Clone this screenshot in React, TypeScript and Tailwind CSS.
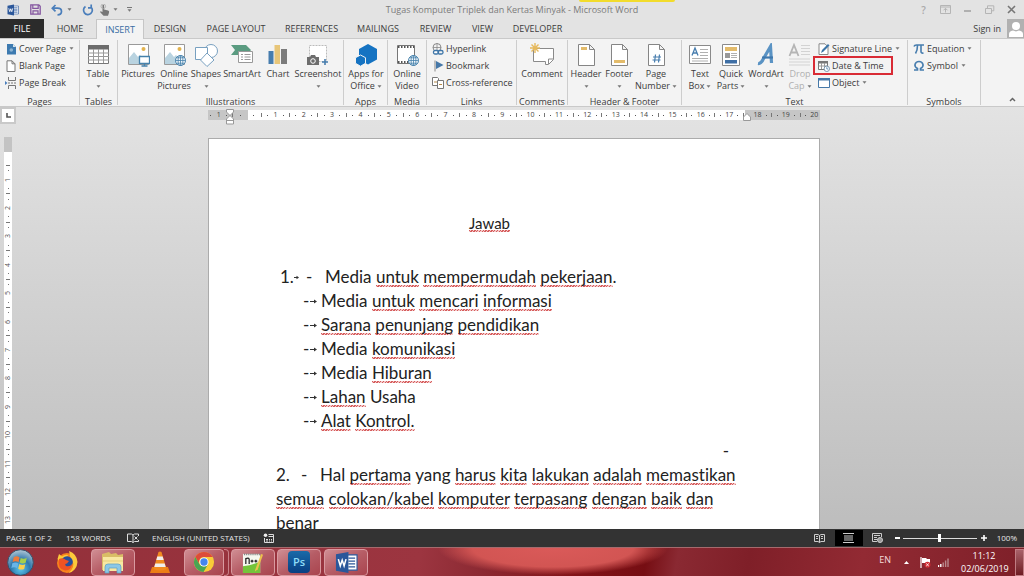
import { Fragment, useState } from "react";
import type { ReactNode } from "react";

const tabs = [
  { label: "HOME", width: "w-[52px]" },
  { label: "INSERT", width: "w-12" },
  { label: "DESIGN", width: "w-[52px]" },
  { label: "PAGE LAYOUT", width: "w-20" },
  { label: "REFERENCES", width: "w-[71px]" },
  { label: "MAILINGS", width: "w-[62px]" },
  { label: "REVIEW", width: "w-[53px]" },
  { label: "VIEW", width: "w-[41px]" },
  { label: "DEVELOPER", width: "w-[69px]" },
];

const answers = [
  "Media _untuk_ _mencari_ _informasi_",
  "_Sarana_ _penunjang_ _pendidikan_",
  "Media _komunikasi_",
  "Media _Hiburan_",
  "_Lahan_ Usaha",
  "_Alat_ _Kontrol._",
];

export default function App() {
  const [active, setActive] = useState("INSERT");

  return (
    <div className="flex h-screen flex-col overflow-hidden bg-[#e3e3e3] font-['Open_Sans','Noto_Sans',sans-serif] text-[9px] leading-3 text-[#3c3c3c]">
      <TitleBar />
      <nav className="flex h-[19px] shrink-0 items-stretch">
        <button className="w-11 bg-[#2b2b2b] text-white">FILE</button>
        {tabs.map((tab) => (
          <button
            key={tab.label}
            onClick={() => setActive(tab.label)}
            className={`${tab.width} whitespace-nowrap ${
              active === tab.label
                ? "relative z-10 -mb-px border border-b-0 border-[#c6c6c6] bg-[#f3f3f3] text-[#3b6da3]"
                : ""
            }`}
          >
            {tab.label}
          </button>
        ))}
        <a href="#signin" className="ml-auto flex items-center pr-[6px]">
          Sign in
        </a>
        <svg className="h-[19px] w-[17px]" viewBox="0 0 17 19">
          <rect width="17" height="19" fill="#b1b1b1" />
          <circle cx="9" cy="7" r="4" fill="#fff" />
          <path d="M2 18v-3q0-3 4-3.500l3 1 3-1q4 .5 4 3.500v3z" fill="#fff" />
        </svg>
      </nav>
      <Ribbon />
      <Workspace />
      <StatusBar />
      <Taskbar />
    </div>
  );
}

function TitleBar() {
  return (
    <header className="relative flex h-[19px] shrink-0 items-center">
      <div className="absolute top-0 left-[579px] h-[2px] w-24 rounded-b bg-[#f2dc2c]" />
      <div className="flex flex-1 items-center pl-[7px] text-[#555]">
        <WordLogo className="h-3 w-3" />
        <button aria-label="Save" className="ml-[11px]">
          <svg className="h-[11px] w-[11px]" viewBox="0 0 11 11" fill="none" stroke="#8455a0">
            <path d="M.8.800h8l1.400 1.400v8H.8z" strokeWidth="1.300" />
            <path d="M2.800 1v3.300h5.400V1M3 10V6.800h5V10" strokeWidth="1.200" />
          </svg>
        </button>
        <button aria-label="Undo" className="ml-[10px]">
          <svg className="h-3 w-3" viewBox="0 0 12 12" fill="none" stroke="#4a7ebb" strokeWidth="1.700">
            <path d="M4.500 1L1.300 4.200l3.200 3.200M1.500 4.200h5q4 0 4 3.300t-4 3.300" />
          </svg>
        </button>
        <Caret className="ml-1" />
        <button aria-label="Repeat" className="ml-[10px]">
          <svg className="h-3 w-3" viewBox="0 0 12 12" fill="none" stroke="#4a7ebb" strokeWidth="1.700">
            <path d="M3.500 2.500A4.400 4.400 0 1 0 9 3M6 3.800h3.200V.6" />
          </svg>
        </button>
        <button aria-label="Touch mode" className="ml-[5px]">
          <svg className="h-3 w-3" viewBox="0 0 12 12">
            <path d="M3.500 1q1.500-.8 1.600.6v4l4 .9q1.500.6.9 2.200L9 11.800H4.500L1 8l.6-.8L3.500 8z" fill="#777" />
            <circle cx="4.300" cy="2.300" r="2.300" fill="none" stroke="#aaa" strokeWidth=".8" />
          </svg>
        </button>
        <Caret className="ml-[2px]" />
        <button aria-label="Customize toolbar" className="ml-[9px] flex flex-col items-center gap-px">
          <span className="h-px w-[5px] bg-[#777]" />
          <Caret />
        </button>
      </div>
      <h1 className="whitespace-nowrap text-[#7b7b7b]">
        Tugas Komputer Triplek dan Kertas Minyak - Microsoft Word
      </h1>
      <div className="flex flex-1 items-center justify-end gap-[11px] pr-[7px] text-[#aaa]">
        <button aria-label="Help" className="w-[11px] text-[10px] font-semibold">?</button>
        <button aria-label="Ribbon display options">
          <svg className="h-[9px] w-[11px]" viewBox="0 0 11 9" fill="none" stroke="#b5b5b5">
            <path d="M.5.500h10v8H.5zM.5 2h10M5.500 7.500v-4M3.500 5.300l2-2 2 2" />
          </svg>
        </button>
        <button aria-label="Minimize">
          <svg className="h-[9px] w-[11px]" viewBox="0 0 11 9">
            <path d="M2 5h7v2H2z" fill="#b0b0b0" />
          </svg>
        </button>
        <button aria-label="Restore">
          <svg className="h-[9px] w-[11px]" viewBox="0 0 11 9" fill="none" stroke="#b5b5b5">
            <path d="M1.500 3.500h6v5h-6zM3.500 3V.8h6.300v5H8" />
          </svg>
        </button>
        <button aria-label="Close">
          <svg className="h-[9px] w-[11px]" viewBox="0 0 11 9" stroke="#777" strokeWidth="1.600">
            <path d="M2 1l7 7M9 1L2 8" />
          </svg>
        </button>
      </div>
    </header>
  );
}

function Caret({ className = "" }: { className?: string }) {
  return (
    <svg className={`inline-block h-[3px] w-[5px] ${className}`} viewBox="0 0 5 3">
      <path d="M.5.300h4L2.500 2.700z" fill="#777" />
    </svg>
  );
}

function Group({ label, width, children }: { label: string; width: string; children: ReactNode }) {
  return (
    <section className={`mt-px flex h-[65px] shrink-0 flex-col border-r border-[#cdcdcd] ${width}`}>
      <div className="flex h-14 shrink-0">{children}</div>
      <h2 className="text-center whitespace-nowrap">{label}</h2>
    </section>
  );
}

type BigProps = {
  icon: ReactNode;
  lines: string[];
  width: string;
  caret?: boolean;
  disabled?: boolean;
};

function Big({ icon, lines, width, caret, disabled }: BigProps) {
  return (
    <button
      disabled={disabled}
      className={`flex shrink-0 flex-col items-center pt-[3px] whitespace-nowrap ${width} ${disabled ? "text-[#b0b0b0]" : ""}`}
    >
      <svg className="mb-px h-6 w-6 shrink-0" viewBox="0 0 24 24" fill="none">
        {icon}
      </svg>
      <span>{lines[0]}</span>
      <span className="flex h-3 items-center gap-[2px]">
        {lines[1]}
        {caret && <Caret />}
      </span>
    </button>
  );
}

function Small({ icon, label, caret, className = "" }: { icon: ReactNode; label: string; caret?: boolean; className?: string }) {
  return (
    <button className={`flex h-[17px] items-center gap-[2px] whitespace-nowrap ${className}`}>
      <svg className="h-3 w-3 shrink-0" viewBox="0 0 12 12" fill="none">
        {icon}
      </svg>
      {label}
      {caret && <Caret className="ml-px" />}
    </button>
  );
}

const picture = (
  <>
    <path d="M2.500 1.500h20v20h-20z" fill="#fff" stroke="#9a9a9a" />
    <circle cx="17.500" cy="6" r="2" fill="#e3b34e" />
    <path d="M3 21V15l5-6 4 5 2-2 4 5v4z" fill="#b9d3e0" />
  </>
);

const globe = (
  <g stroke="#4682ac">
    <circle cx="18.500" cy="17.500" r="5" fill="#f4f8fb" />
    <path d="M13.500 17.500h10M18.500 12.500v10M14.500 14.800h8M14.500 20.200h8" strokeWidth=".8" />
    <ellipse cx="18.500" cy="17.500" rx="2.400" ry="5" strokeWidth=".8" />
  </g>
);

const sheet = <path d="M4.500 1.500h11l5 5v16h-16zM15.500 1.500v5h5" fill="#fff" stroke="#858585" />;

function Ribbon() {
  return (
    <div className="flex h-[69px] shrink-0 border-y border-[#c9c9c9] bg-[#f3f3f3]">
      <Group label="Pages" width="w-20">
        <div className="flex flex-col pl-[5px]">
          <Small
            label="Cover Page"
            caret
            icon={
              <>
                <path d="M2 1h6l3 3v7.500H2z" fill="#3d7ab0" />
                <path d="M8 1v3h3z" fill="#d5e3ee" />
                <circle cx="6.300" cy="7" r="1.800" fill="#8ab2d2" />
              </>
            }
          />
          <Small label="Blank Page" icon={<path d="M2 .8h5l3 3v7.700H2zM7 .8v3h3" fill="#fff" stroke="#777" />} />
          <Small
            label="Page Break"
            icon={
              <>
                <path d="M3.500 0v3.500h7V0M3.500 12V8.500h7V12" stroke="#777" />
                <path d="M3 6h9" stroke="#777" strokeDasharray="2 1" />
                <path d="M0 4l2.500 2L0 8z" fill="#4a7ebb" />
              </>
            }
          />
        </div>
      </Group>
      <Group label="Tables" width="w-[38px]">
        <Big
          width="w-9"
          lines={["Table"]}
          caret
          icon={
            <>
              <path d="M2.500 2.500h20v18h-20z" fill="#fff" stroke="#777" />
              <path d="M2 2h21v4.500H2z" fill="#6b6b6b" />
              <path d="M2 10h21M2 13.500h21M2 17h21M7.500 6v14M12.500 6v14M17.500 6v14" stroke="#999" />
            </>
          }
        />
      </Group>
      <Group label="Illustrations" width="w-[226px]">
        <Big
          width="w-10"
          lines={["Pictures"]}
          icon={
            <>
              {picture}
              <path d="M13.500 13.500h10v7h-10zM18.500 21v2M15.500 23h6" fill="#fff" stroke="#4682ac" strokeWidth="1.300" />
            </>
          }
        />
        <Big width="w-8" lines={["Online", "Pictures"]} icon={<>{picture}{globe}</>} />
        <Big
          width="w-8"
          lines={["Shapes"]}
          caret
          icon={
            <g fill="#fff" stroke="#78a0c0">
              <circle cx="17" cy="8" r="6.500" />
              <path d="M1.500 4.500h12v12h-12z" />
              <path d="M13 10l7 7-7 6.500-6.500-6.500z" />
            </g>
          }
        />
        <Big
          width="w-10"
          lines={["SmartArt"]}
          icon={
            <>
              <path d="M1 2h15l5 5-4 5H1l4-5z" fill="#5a9b80" />
              <path d="M8.500 8.500h14v11h-14z" fill="#fff" stroke="#999" />
              <path d="M11 11.500h2M14.500 11.500h6M11 14h2M14.500 14h6M11 16.500h2M14.500 16.500h6" stroke="#999" />
            </>
          }
        />
        <Big
          width="w-8"
          lines={["Chart"]}
          icon={
            <>
              <path d="M2.500 8h5v13h-5z" fill="#477dae" />
              <path d="M8.500 2H14v19H8.500z" fill="#e8c679" />
              <path d="M15 6h6v15h-6z" fill="#7b7b7b" />
            </>
          }
        />
        <Big
          width="w-12"
          lines={["Screenshot"]}
          caret
          icon={
            <>
              <path d="M3.500 2.500h17v16h-17z" fill="#fff" stroke="#bbb" strokeDasharray="2 1" />
              <path d="M1 14h3l1-2h4l1 2h3v8H1z" fill="#6d6d6d" />
              <circle cx="7" cy="18" r="2.300" stroke="#fff" />
              <path d="M19 16v6M16 19h6" stroke="#477dae" strokeWidth="1.600" />
            </>
          }
        />
      </Group>
      <Group label="Apps" width="w-11">
        <Big
          width="w-11"
          lines={["Apps for", "Office"]}
          caret
          icon={
            <>
              <path d="M14 1l9 5v10.500l-9 5-9-5V6z" fill="#1573c2" />
              <path d="M6.500 12l5 2.700v5.600l-5 2.900-5-2.900v-5.600z" fill="#1573c2" stroke="#f3f3f3" />
            </>
          }
        />
      </Group>
      <Group label="Media" width="w-[39px]">
        <Big
          width="w-[38px]"
          lines={["Online", "Video"]}
          icon={
            <>
              <path d="M2.500 2.500h17v18h-17z" fill="#fff" stroke="#777" />
              <path d="M3 4h16M3 19h16" stroke="#555" strokeWidth="2" strokeDasharray="1.500 1.500" />
              {globe}
            </>
          }
        />
      </Group>
      <Group label="Links" width="w-[90px]">
        <div className="flex flex-col pl-[5px]">
          <Small
            label="Hyperlink"
            icon={
              <>
                <circle cx="5" cy="4.500" r="4" stroke="#888" />
                <path d="M1 4.500h8M5 .5v8" stroke="#888" strokeWidth=".8" />
                <rect x="1.500" y="7.500" width="5" height="3.500" rx="1.500" fill="#fff" stroke="#3e76a8" strokeWidth="1.300" />
                <rect x="6" y="7.500" width="5" height="3.500" rx="1.500" stroke="#3e76a8" strokeWidth="1.300" />
              </>
            }
          />
          <Small
            label="Bookmark"
            icon={
              <>
                <path d="M3 .5v11" stroke="#888" />
                <path d="M4 1l7.500 4L4 9z" fill="#4678a8" />
              </>
            }
          />
          <Small
            label="Cross-reference"
            icon={
              <>
                <path d="M.5.500h5l1 1v7h-6z" fill="#fff" stroke="#777" />
                <path d="M5.500 3.500h6v8h-6z" fill="#fff" stroke="#777" />
                <path d="M2 5h3M7 7.500h3" stroke="#b68b4a" />
              </>
            }
          />
        </div>
      </Group>
      <Group label="Comments" width="w-[51px]">
        <Big
          width="w-[50px]"
          lines={["Comment"]}
          icon={
            <>
              <path d="M3.500 5.500h20v11l-5 5h-3v-3h-12z" fill="#fff" stroke="#8a8a8a" />
              <path d="M18.500 21v-5h5" stroke="#8a8a8a" />
              <path d="M5 0v10M0 5h10M1.500 1.500l7 7M8.500 1.500l-7 7" stroke="#e6b95c" strokeWidth="1.400" />
            </>
          }
        />
      </Group>
      <Group label="Header & Footer" width="w-[114px]">
        <Big
          width="ml-px w-[34px]"
          lines={["Header"]}
          caret
          icon={<>{sheet}<path d="M7 4h6v3H7z" fill="#e3bb6a" /></>}
        />
        <Big
          width="w-8"
          lines={["Footer"]}
          caret
          icon={<>{sheet}<path d="M7 17h11v3H7z" fill="#e3bb6a" /></>}
        />
        <Big
          width="w-[42px]"
          lines={["Page", "Number"]}
          caret
          icon={
            <>
              {sheet}
              <path d="M11.500 11.500l-1 8M15.500 11.500l-1 8M9 14h8M8.500 17h8" stroke="#477dae" strokeWidth="1.200" />
            </>
          }
        />
      </Group>
      <Group label="Text" width="w-[226px]">
        <Big
          width="ml-[2px] w-8"
          lines={["Text", "Box"]}
          caret
          icon={
            <>
              <path d="M1.500 2.500h21v18h-21z" fill="#fff" stroke="#8a8a8a" />
              <path d="M4 12.500l3-7.500 3 7.500M5 10h4" stroke="#477dae" strokeWidth="1.300" />
              <path d="M12 6.500h8M12 9.500h8M12 12.500h8M4 15.500h16M4 18h16" stroke="#b0b0b0" />
            </>
          }
        />
        <Big
          width="w-[30px]"
          lines={["Quick", "Parts"]}
          caret
          icon={
            <>
              <path d="M3.500 1.500h17v21h-17z" fill="#fff" stroke="#8a8a8a" />
              <path d="M6 4h12v4H6z" fill="#e3bb6a" />
              <path d="M6 10h5v5H6z" fill="#999" />
              <path d="M12 10.500h6M12 12.500h6M12 14.500h6" stroke="#b0b0b0" />
              <path d="M6 17h12v3.500H6z" fill="#3f6fa5" />
            </>
          }
        />
        <Big
          width="w-10"
          lines={["WordArt"]}
          caret
          icon={
            <>
              <path d="M4 20.500q3 .5 5-4L16.500 3.500 17.500 20" stroke="#5a93c4" strokeWidth="3.200" />
              <path d="M8 14.500h11" stroke="#3f78ad" strokeWidth="2.200" />
            </>
          }
        />
        <Big
          width="w-7"
          lines={["Drop", "Cap"]}
          caret
          disabled
          icon={
            <>
              <path d="M1.500 13L6 2l4.500 11M3 9.500h6" stroke="#b5b5b5" strokeWidth="1.800" />
              <path d="M13 2.500h9M13 5.500h9M13 8.500h9M13 11.500h9M1 16h21M1 19h21M1 22h21" stroke="#d3d3d3" />
            </>
          }
        />
        <div className="flex flex-col items-start">
          <Small
            label="Signature Line"
            caret
            className="pl-1"
            icon={
              <>
                <path d="M1 .8h6l3 3v7.700H1z" fill="#fff" stroke="#888" />
                <path d="M3 10l1-3 6-6 1.500 1.500-6 6z" fill="#3e76a8" />
              </>
            }
          />
          <Small
            label="Date & Time"
            className="relative w-[78px] pl-1 outline-2 -outline-offset-1 outline-[#d92b35]"
            icon={
              <>
                <path d="M.5 1.500h9v8h-9z" fill="#fff" stroke="#777" />
                <path d="M0 1h10v2.500H0z" fill="#777" />
                <path d="M.5 6h9M3.500 3v6M6.500 3v6" stroke="#999" />
                <circle cx="8.800" cy="8.800" r="2.700" fill="#fff" stroke="#7a97b0" />
                <path d="M8.800 7.200v1.800h1.400" stroke="#477dae" strokeWidth=".8" />
              </>
            }
          />
          <Small
            label="Object"
            caret
            className="pl-1"
            icon={
              <>
                <path d="M.5 1.500h11v9H.5z" fill="#fff" stroke="#4678a8" />
                <path d="M0 1h12v2.500H0z" fill="#4678a8" />
              </>
            }
          />
        </div>
      </Group>
      <Group label="Symbols" width="w-[73px]">
        <div className="flex flex-col pl-[5px]">
          <Small
            label="Equation"
            caret
            icon={<path d="M1 3.500Q1.500 2 3.500 2H11M4.500 2.500q0 5-2 8M8 2.500v6q0 2 2.500 1.500" stroke="#477dae" strokeWidth="1.600" />}
          />
          <Small
            label="Symbol"
            caret
            icon={<path d="M1 10h3.500V8.500Q1.500 7 2 4.500 2.800 1.500 6 1.500t4 3q.5 2.500-2.500 4V10H11" stroke="#477dae" strokeWidth="1.600" />}
          />
        </div>
      </Group>
      <button aria-label="Collapse the ribbon" className="mt-auto mr-2 mb-1 ml-auto">
        <svg className="h-[5px] w-[7px]" viewBox="0 0 7 5" fill="none" stroke="#666" strokeWidth="1.500">
          <path d="M1 4l2.500-2.500L6 4" />
        </svg>
      </button>
    </div>
  );
}

const hMarks = ["1", "", ...Array.from({ length: 20 }, (_, i) => String(i + 1))];
const vMarks = Array.from({ length: 13 }, (_, i) => String(i + 1));

function Workspace() {
  return (
    <div className="flex min-h-0 flex-1 bg-gradient-to-b from-[#e3e3e3] to-[#bdbdbd]">
      <div className="flex w-4 shrink-0 flex-col items-center">
        <div className="flex h-[17px] w-4 shrink-0 items-center justify-center border-2 border-[#c9c9c9] bg-white">
          <svg className="h-[5px] w-[5px]" viewBox="0 0 5 5">
            <path d="M1 0v4h4" fill="none" stroke="#555" strokeWidth="1.600" />
          </svg>
        </div>
        <div className="mt-[13px] h-[15px] w-2 shrink-0 bg-[#c3c3c3]" />
        <div className="w-2 shrink-0 bg-white pt-[13px] text-[7px] leading-2 text-[#555]">
          <div className="flex h-[369px] flex-col">
            {vMarks.map((n) => (
              <div key={n} className="flex flex-1 flex-col items-center justify-between">
                <span className="h-px w-1 bg-[#777]" />
                <span className="h-px w-px bg-[#777]" />
                <span className="flex h-2 w-2 -rotate-90 items-center justify-center">{n}</span>
                <span className="h-px w-px bg-[#777]" />
                <span />
              </div>
            ))}
          </div>
        </div>
      </div>
      <div className="flex flex-1 flex-col items-center pr-3">
        <div className="relative mt-[3px] w-[612px] shrink-0">
          <div className="flex h-[10px] overflow-hidden bg-[linear-gradient(90deg,#c6c6c6_40px,#fff_40px,#fff_537px,#c6c6c6_537px)] text-[7px] leading-[10px] text-[#444]">
            <div className="-ml-1 flex w-[624px] shrink-0">
              {hMarks.map((n, i) => (
                <div key={i} className="flex flex-1 items-center justify-between">
                  <span className="h-1 w-px bg-[#777]" />
                  <span className="h-px w-px bg-[#555]" />
                  <span>{n}</span>
                  <span className="h-px w-px bg-[#555]" />
                  <span />
                </div>
              ))}
            </div>
          </div>
          <svg className="absolute -top-px left-[18px] h-[16px] w-2" viewBox="0 0 8 16" fill="#fff" stroke="#999">
            <path d="M.5.500h7v2.500L4 6.500.500 3zM4 6.500L7.500 10v5H.500v-5zM.5 11.500h7" />
          </svg>
          <svg className="absolute top-[3px] left-[535px] h-2 w-2" viewBox="0 0 8 8" fill="#fff" stroke="#999">
            <path d="M4 .500L7.500 4v3.500H.500V4z" />
          </svg>
        </div>
        <article className="mt-[18px] min-h-0 w-[612px] flex-1 overflow-hidden border border-b-0 border-[#ababab] bg-white px-[67px] pt-[72px] font-[Lato,'Open_Sans',sans-serif] text-[17px] leading-6 text-[#222] [font-variant-ligatures:none]">
          <h2 className="pr-[49px] text-center text-[15px]">
            <Spelled text="_Jawab_" />
          </h2>
          <div className="mt-[30px] flex pl-1">
            <span className="w-[14px]">1.</span>
            <Arrow className="w-3" short />
            <span className="w-[19px]">-</span>
            <p>
              <Spelled text="Media _untuk_ _mempermudah_ _pekerjaan_." />
            </p>
          </div>
          <ul className="pl-[27px]">
            {answers.map((a) => (
              <li key={a} className="flex">
                <span className="w-[6px]">-</span>
                <Arrow className="w-3" />
                <span>
                  <Spelled text={a} />
                </span>
              </li>
            ))}
          </ul>
          <div className="mt-[6px] pr-[23px] text-right">-</div>
          <p className="whitespace-nowrap">
            <span className="inline-block w-[25px]">2.</span>
            <span className="inline-block w-[19px]">-</span>
            <Spelled text="Hal _pertama_ yang _harus_ _kita_ _lakukan_ _adalah_ _memastikan_" />
            <br />
            <Spelled text="_semua_ _colokan/kabel_ _komputer_ _terpasang_ _dengan_ _baik_ _dan_" />
            <br />
            benar
          </p>
        </article>
      </div>
    </div>
  );
}

// words wrapped in underscores get the red spelling squiggle
function Spelled({ text }: { text: string }) {
  return (
    <>
      {text.split("_").map((part, i) =>
        i % 2 === 1 ? (
          <span
            key={i}
            className="bg-[repeating-linear-gradient(135deg,#d65c5c_0px,#d65c5c_1px,#f3c9c9_1px,#f3c9c9_2px)] bg-[length:100%_2px] bg-bottom bg-no-repeat"
          >
            {part}
          </span>
        ) : (
          <Fragment key={i}>{part}</Fragment>
        )
      )}
    </>
  );
}

function Arrow({ className = "", short }: { className?: string; short?: boolean }) {
  return (
    <span className={`flex items-center ${className}`}>
      <svg className="h-[5px] w-2" viewBox="0 0 8 5">
        <path d={short ? "M0 2.500h3" : "M1 2.500h5"} stroke="#333" />
        <path d={short ? "M2.500.8L5 2.500 2.500 4.200z" : "M5 .5l3 2-3 2z"} fill="#333" />
      </svg>
    </span>
  );
}

function StatusBar() {
  return (
    <footer className="flex h-[18px] shrink-0 items-center bg-[#333] pl-[6px] text-[8px] whitespace-nowrap text-[#e6e6e6]">
      <span className="w-[60px]">PAGE 1 OF 2</span>
      <span className="w-[61px]">158 WORDS</span>
      <button aria-label="Proofing errors" className="w-[25px]">
        <svg className="h-[10px] w-3" viewBox="0 0 12 10" fill="none" stroke="#ddd">
          <path d="M6 2L4.500 1H.500v7.500h4L6 9.500V2l1.500-1h4v2M6 9.500l1.500-1h4V7M7.500 3.500l3 3M10.500 3.500l-3 3" />
        </svg>
      </button>
      <span className="w-[111px]">ENGLISH (UNITED STATES)</span>
      <button aria-label="Record macro">
        <svg className="h-[10px] w-[11px]" viewBox="0 0 11 10" fill="none" stroke="#ddd">
          <path d="M1.500 5v4.500h9V1.500h-5M5.500 3.500h5M3 6.500h2M6 6.500h1M8 6.500h1M3 8h2M6 8h1M8 8h1" />
          <circle cx="2.500" cy="2.200" r="1.800" fill="#eee" stroke="none" />
        </svg>
      </button>
      <div className="ml-auto flex h-full items-center pr-[7px]">
        <button aria-label="Read mode" className="mr-[10px]">
          <svg className="h-[9px] w-[11px]" viewBox="0 0 11 9" fill="none" stroke="#ccc">
            <path d="M5.500 1.500v7L4 7.500H.500V.500H4l1.500 1L7 .5h3.500v7H7l-1.500 1M2 2.500h2M2 4.500h2M7 2.500h2M7 4.500h2" />
          </svg>
        </button>
        <button aria-label="Print layout" className="mr-[9px] flex h-4 w-7 items-center justify-center bg-black">
          <svg className="h-[10px] w-[11px]" viewBox="0 0 11 10" fill="none" stroke="#ccc">
            <path d="M0 .5h11M0 9.500h11M1 3h9M1 5h9M1 7h9" />
          </svg>
        </button>
        <button aria-label="Web layout" className="mr-3">
          <svg className="h-[10px] w-[11px]" viewBox="0 0 11 10" fill="none" stroke="#ccc">
            <path d="M5 8.500H.500v-8h9V4M2 2.500h6M2 4.500h3M2 6.500h3" />
            <circle cx="8" cy="7" r="2.500" fill="#999" />
          </svg>
        </button>
        <button aria-label="Zoom out" className="mr-[3px] h-[2px] w-[5px] bg-white" />
        <input
          type="range"
          aria-label="Zoom"
          min={0}
          max={200}
          defaultValue={100}
          className="h-[9px] w-[74px] appearance-none bg-[linear-gradient(#ddd,#ddd)] bg-[length:100%_1px] bg-center bg-no-repeat [&::-webkit-slider-thumb]:h-2 [&::-webkit-slider-thumb]:w-[3px] [&::-webkit-slider-thumb]:appearance-none [&::-webkit-slider-thumb]:bg-white"
        />
        <button aria-label="Zoom in" className="ml-1 w-[6px]">
          <svg className="h-[6px] w-[6px]" viewBox="0 0 6 6" stroke="#fff" strokeWidth="1.600">
            <path d="M3 0v6M0 3h6" />
          </svg>
        </button>
        <span className="ml-[10px]">100%</span>
      </div>
    </footer>
  );
}

function WordLogo({ className = "" }: { className?: string }) {
  return (
    <svg className={className} viewBox="0 0 24 24">
      <path d="M12 4h11v16H12z" fill="#fff" stroke="#2b579a" strokeWidth="1.200" />
      <path d="M14 7.500h7M14 10.500h7M14 13.500h7M14 16.500h7" stroke="#2b579a" strokeWidth="1.400" />
      <path d="M1 3.500L14 1v22L1 20.500z" fill="#2b579a" />
      <path d="M3.500 8.500l2 7 2-6 2 6 2-7" fill="none" stroke="#fff" strokeWidth="1.600" />
    </svg>
  );
}

function TaskButton({ label, open, children, className = "" }: { label: string; open?: boolean; children: ReactNode; className?: string }) {
  return (
    <button
      aria-label={label}
      className={`flex h-[27px] items-center justify-center ${
        open ? "rounded-sm border border-[#d99aa0] bg-gradient-to-br from-[#d08e94] via-[#b65d66] to-[#a9444e]" : ""
      } ${className}`}
    >
      {children}
    </button>
  );
}

function Taskbar() {
  return (
    <div className="flex h-[29px] shrink-0 items-center border-t border-[#a66a6d] bg-[radial-gradient(ellipse_115px_27px_at_54%_0,#da5a59_0%,#d25553_70%,transparent_100%),linear-gradient(100deg,#93303a_0%,#9c3540_41%,#8c2a33_47%,#831419_56%,#760e13_63%,#8a2932_66%,#7f1f28_73%,#922a33_84%,#7e2029_100%)] text-white">
      <TaskButton label="Start" className="w-10">
        <svg className="h-[27px] w-[27px]" viewBox="0 0 28 28">
          <defs>
            <radialGradient id="orb" cx=".5" cy=".75" r=".75">
              <stop offset="0" stopColor="#5cc8ee" />
              <stop offset=".5" stopColor="#2e78ac" />
              <stop offset="1" stopColor="#b5c9d6" />
            </radialGradient>
          </defs>
          <circle cx="14" cy="14" r="13.300" fill="url(#orb)" stroke="#31506a" />
          <path d="M7 8.500q3-2 6 .200l-1 5q-3-2-6.200-.200z" fill="#ee7a3b" />
          <path d="M14.200 9.300q3 1.700 6.300 0l-1.200 5q-3 1.500-6.200-.200z" fill="#a6cf4c" />
          <path d="M5.500 14.800q3-1.800 6.200.200l-1.200 4.800q-3-1.800-6-.2z" fill="#69b5e8" />
          <path d="M12.800 15.600q3 1.700 6.200.100l-1.200 5q-3 1.500-6.200-.300z" fill="#fbd04c" />
        </svg>
      </TaskButton>
      <TaskButton label="Firefox" className="ml-1 w-[46px]">
        <svg className="h-6 w-6" viewBox="0 0 24 24">
          <circle cx="12" cy="13" r="10" fill="#f8841c" />
          <path d="M2.500 9L4 4l3 2.500Q10 4 13 5l-2 4-6 3zM14 1q8 3 8.500 11-1 9-9 11 7-6 4-12-3-4-3.500-10z" fill="#fdc93b" />
          <circle cx="12" cy="12" r="5.800" fill="#284f9c" />
          <path d="M4 9q4-2 7 1l3 1-2 2.500q-3 0-1 2.500 4 1 6-2-1 7-7 6.500Q2 19 4 9z" fill="#ef5324" />
        </svg>
      </TaskButton>
      <TaskButton label="Explorer" open className="ml-px w-11">
        <svg className="h-[23px] w-6" viewBox="0 0 24 23">
          <path d="M1 3l7-2 2 2 5-1 2 2 5-1v16H1z" fill="#d9bd66" />
          <path d="M2 6h20v14H2z" fill="#f8e8a2" />
          <path d="M2 10h20" stroke="#e7cf78" />
          <path d="M4 22v-6q0-3 3-3h10q3 0 3 3v6h-4v-5H8v5z" fill="#8bc8e6" stroke="#5b9dc2" strokeWidth=".7" />
        </svg>
      </TaskButton>
      <TaskButton label="VLC" className="w-[49px]">
        <svg className="h-[23px] w-5" viewBox="0 0 20 23">
          <path d="M2 16h16l2 6H0z" fill="#ed7d15" />
          <path d="M8.500 1q1.500-1 3 0l5 17q-6.500 3-13 0z" fill="#f28a20" />
          <path d="M7.300 5.500h5.400l1 3.500H6.300zM5.300 12.500h9.400l1 3.500H4.300z" fill="#f1eeee" />
        </svg>
      </TaskButton>
      <TaskButton label="Chrome" open className="w-10">
        <svg className="h-[22px] w-[22px]" viewBox="0 0 24 24">
          <circle cx="12" cy="12" r="11" fill="#f9cb38" />
          <path d="M2.500 6.500A11 11 0 0 1 21.500 6.500H12a5.500 5.500 0 0 0-4.800 8.200z" fill="#dd4b39" />
          <path d="M2.500 6.500A11 11 0 0 0 11.500 23l4.700-8.300a5.500 5.500 0 0 1-9 0z" fill="#4aa553" />
          <circle cx="12" cy="12" r="5" fill="#fff" />
          <circle cx="12" cy="12" r="4" fill="#4585ee" />
        </svg>
      </TaskButton>
      <span className="h-[27px] w-[5px] rounded-r-sm border border-l-0 border-[#c98189]" />
      <TaskButton label="Notepad++" open className="ml-[2px] w-11">
        <svg className="h-[23px] w-[22px]" viewBox="0 0 23 24">
          <path d="M1 3h18v20H1z" fill="#f5f7ef" />
          <path d="M1 16q9-1 18-5v12H1z" fill="#74c43a" />
          <path d="M4 13.500V8q3-1.500 3.500.5v5M9 10.500h3M10.500 9v3M13 10.500h3M14.500 9v3" fill="none" stroke="#222" strokeWidth="1.300" />
          <path d="M2 3.500h17" stroke="#777" strokeDasharray="1 1" strokeWidth="2" />
          <path d="M14 19L20 3l2 1-5.500 15-3 2.500z" fill="#ecc14c" />
        </svg>
      </TaskButton>
      <TaskButton label="Photoshop" open className="ml-[2px] w-11">
        <span className="flex h-[22px] w-[22px] items-center justify-center rounded-sm bg-gradient-to-b from-[#1b6aa8] to-[#093f82] text-[11px] font-semibold text-[#8fdcf8]">
          Ps
        </span>
      </TaskButton>
      <TaskButton label="Word" open className="ml-[3px] w-11">
        <WordLogo className="h-[23px] w-[23px]" />
      </TaskButton>
      <div className="ml-auto flex h-full items-center">
        <span className="pb-1 text-[#f4dcdc]">EN</span>
        <svg className="ml-[13px] h-[3px] w-[5px]" viewBox="0 0 5 3">
          <path d="M0 3l2.500-3L5 3z" fill="#fff" />
        </svg>
        <svg className="ml-[11px] h-[11px] w-[11px]" viewBox="0 0 11 11">
          <path d="M1 0v11" stroke="#fff" strokeWidth="1.200" />
          <path d="M2 1h4l1 1h3v5H6L5 6H2z" fill="#fff" />
          <circle cx="7.500" cy="7.800" r="3" fill="#cf2c33" />
          <path d="M6.200 6.500l2.600 2.600M8.800 6.500L6.200 9.100" stroke="#fff" strokeWidth=".9" />
        </svg>
        <svg className="ml-[7px] h-[9px] w-[11px]" viewBox="0 0 11 9">
          <path d="M.5 9V7M2.800 9V6" stroke="#fff" strokeWidth="1.400" />
          <path d="M5.200 9V4.500M7.600 9V2.500M10 9V.500" stroke="#b8898d" strokeWidth="1.400" />
        </svg>
        <div className="ml-3 w-[46px] text-center leading-[13px]">
          <div>11:12</div>
          <div>02/06/2019</div>
        </div>
        <button
          aria-label="Show desktop"
          className="ml-2 h-[27px] w-[9px] border border-[#c07d83] bg-gradient-to-b from-[#a8626a] to-[#6f1c24]"
        />
      </div>
    </div>
  );
}
